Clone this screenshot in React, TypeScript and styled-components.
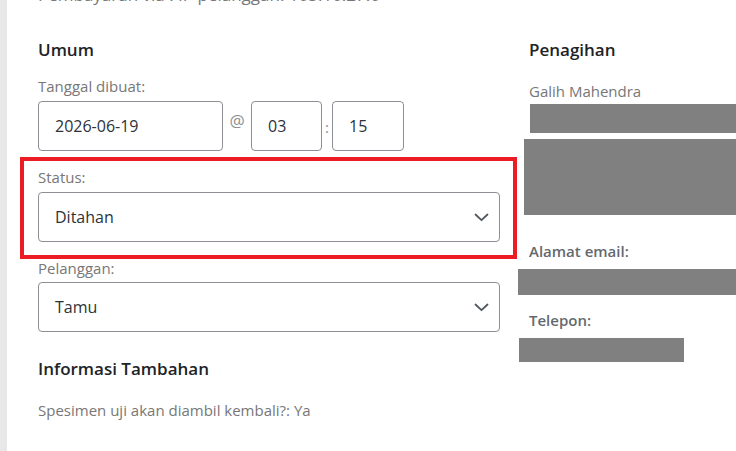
import React from "react";
import styled, { createGlobalStyle } from "styled-components";

const GlobalStyle = createGlobalStyle`
  html, body {
    margin: 0;
    padding: 0;
    background: #ffffff;
    overflow: hidden;
  }
  body {
    font-family: "Open Sans", "Noto Sans", Arial, sans-serif;
  }
  * { box-sizing: border-box; }
`;

const Page = styled.div`
  display: flex;
  width: 736px;
  height: 451px;
  overflow: hidden;
`;

const Gutter = styled.div`
  width: 7px;
  flex: none;
  background: #e8e8e8;
`;

const Panel = styled.div`
  position: relative;
  flex: 1;
  padding-left: 31px;
  overflow: hidden;
`;

/* Order meta line, scrolled partly out of view at the top */
const Meta = styled.p`
  margin: -16px 0 0;
  font-size: 17px;
  line-height: 22px;
  color: #777777;
  white-space: nowrap;
`;

const Columns = styled.div`
  display: flex;
  gap: 29px;
  margin-top: 32px;
`;

const Column = styled.div<{ $width: number }>`
  width: ${(p) => p.$width}px;
  flex: none;
  display: flex;
  flex-direction: column;
`;

const Heading = styled.h3`
  margin: 0;
  font-size: 17px;
  line-height: 24px;
  font-weight: 600;
  color: #1d2327;
`;

const Label = styled.label<{ $top: number }>`
  display: block;
  margin-top: ${(p) => p.$top}px;
  font-size: 15px;
  line-height: 20px;
  color: #777777;
`;

const DateRow = styled.div`
  display: flex;
  align-items: flex-start;
  margin-top: 5px;
`;

const Field = styled.div<{ $width: number }>`
  width: ${(p) => p.$width}px;
  height: 50px;
  flex: none;
  display: flex;
  align-items: center;
  padding: 0 16px;
  border: 1px solid #8c8f94;
  border-radius: 4px;
  background: #ffffff;
  font-size: 16px;
  color: #2c3338;
`;

const Sep = styled.span<{ $width: number; $top: number; $size: number }>`
  width: ${(p) => p.$width}px;
  flex: none;
  padding-top: ${(p) => p.$top}px;
  text-align: center;
  font-size: ${(p) => p.$size}px;
  line-height: 18px;
  color: #8c8f94;
`;

const Select = styled.div<{ $top: number }>`
  margin-top: ${(p) => p.$top}px;
  height: 50px;
  display: flex;
  align-items: center;
  justify-content: space-between;
  padding: 0 10px 0 16px;
  border: 1px solid #8c8f94;
  border-radius: 4px;
  background: #ffffff;
  font-size: 16px;
  color: #2c3338;
`;

const Chevron = () => (
  <svg width="15" height="9" viewBox="0 0 15 9" fill="none">
    <path d="M1.5 1.5 L7.5 7.2 L13.5 1.5" stroke="#50575e" strokeWidth="1.8" strokeLinecap="round" strokeLinejoin="round" />
  </svg>
);

const SubHeading = styled(Heading)`
  margin-top: 25px;
`;

const Note = styled.p`
  margin: 19px 0 0;
  font-size: 15px;
  line-height: 20px;
  color: #777777;
`;

const Name = styled.p`
  margin: 19px 0 0;
  font-size: 15px;
  line-height: 20px;
  color: #777777;
`;

const Redact = styled.div<{ $top: number; $shift: number; $width: number; $height: number }>`
  margin-top: ${(p) => p.$top}px;
  margin-left: ${(p) => p.$shift}px;
  width: ${(p) => p.$width}px;
  height: ${(p) => p.$height}px;
  background: #808080;
`;

const FieldTitle = styled.p<{ $top: number }>`
  margin: ${(p) => p.$top}px 0 0;
  font-size: 15px;
  line-height: 20px;
  font-weight: 600;
  color: #646970;
`;

const Highlight = styled.div`
  position: absolute;
  left: 13px;
  top: 157px;
  width: 497px;
  height: 102px;
  border: 4px solid #ec1c24;
  pointer-events: none;
`;

export default function App() {
  return (
    <>
      <GlobalStyle />
      <Page>
        <Gutter />
        <Panel>
          <Meta>Pembayaran via . IP pelanggan: 103.10.27.0</Meta>
          <Columns>
            <Column $width={462}>
              <Heading>Umum</Heading>
              <Label $top={14}>Tanggal dibuat:</Label>
              <DateRow>
                <Field $width={185}>2026-06-19</Field>
                <Sep $width={28} $top={11} $size={17}>@</Sep>
                <Field $width={71}>03</Field>
                <Sep $width={10} $top={17} $size={15}>:</Sep>
                <Field $width={72}>15</Field>
              </DateRow>
              <Label $top={16}>Status:</Label>
              <Select $top={5}>
                <span>Ditahan</span>
                <Chevron />
              </Select>
              <Label $top={16}>Pelanggan:</Label>
              <Select $top={4}>
                <span>Tamu</span>
                <Chevron />
              </Select>
              <SubHeading>Informasi Tambahan</SubHeading>
              <Note>Spesimen uji akan diambil kembali?: Ya</Note>
            </Column>
            <Column $width={240}>
              <Heading>Penagihan</Heading>
              <Name>Galih Mahendra</Name>
              <Redact $top={3} $shift={1} $width={220} $height={29} />
              <Redact $top={6} $shift={-5} $width={220} $height={76} />
              <FieldTitle $top={26}>Alamat email:</FieldTitle>
              <Redact $top={8} $shift={-11} $width={230} $height={26} />
              <FieldTitle $top={15}>Telepon:</FieldTitle>
              <Redact $top={8} $shift={-10} $width={165} $height={24} />
            </Column>
          </Columns>
          <Highlight />
        </Panel>
      </Page>
    </>
  );
}
